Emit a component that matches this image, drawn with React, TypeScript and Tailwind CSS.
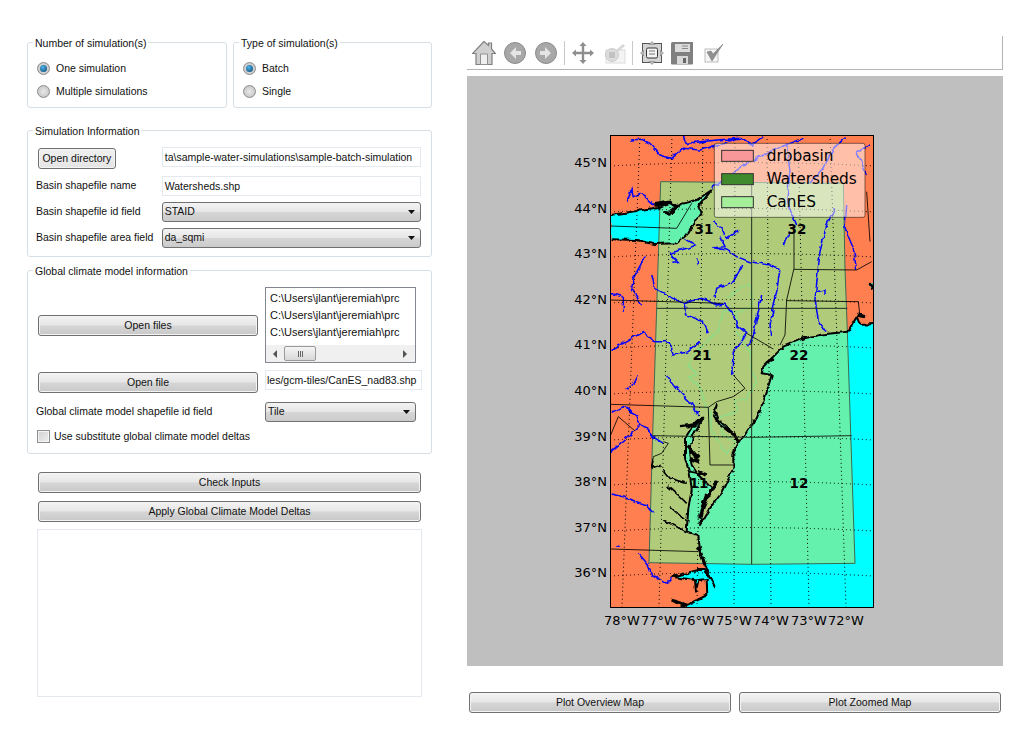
import React from "react";

const btnClass =
  "flex items-center justify-center pt-[1px] border border-[#707070] rounded-[3px] text-[#111] bg-[linear-gradient(#f3f3f3,#e6e6e6_48%,#d6d6d6_52%,#c8c8c8)] shadow-[inset_0_0_0_1px_#f4f4f4]";

const Btn = ({ label, className }: { label: string; className: string }) => (
  <div className={`${btnClass} ${className}`}>{label}</div>
);

const Radio = ({ checked, label }: { checked?: boolean; label: string }) => (
  <div className="flex items-center gap-[6px] h-[13px]">
    <div className="w-[13px] h-[13px] rounded-full border border-[#8c8c8c] bg-[radial-gradient(circle,#e8e8e8,#bdbdbd)] flex items-center justify-center">
      {checked && (
        <div className="w-[7px] h-[7px] rounded-full bg-[radial-gradient(circle_at_40%_35%,#4fb4e8,#07416e)]" />
      )}
    </div>
    <span>{label}</span>
  </div>
);

const Group = ({
  title,
  className,
  children,
}: {
  title: string;
  className: string;
  children: React.ReactNode;
}) => (
  <div className={`relative border border-[#d5dfe5] rounded-[3px] ${className}`}>
    <span className="absolute top-[-7px] left-[5px] bg-white px-[2px] leading-[14px] text-[#111]">
      {title}
    </span>
    {children}
  </div>
);

const Field = ({ value, className }: { value: string; className: string }) => (
  <div
    className={`flex items-center pt-[1px] border border-[#e3e9ef] bg-white px-[2px] whitespace-nowrap ${className}`}
  >
    {value}
  </div>
);

const Select = ({ value, className }: { value: string; className: string }) => (
  <div
    className={`flex items-center justify-between border border-[#707070] rounded-[3px] pl-[2px] pr-[5px] bg-[linear-gradient(#f3f3f3,#e6e6e6_48%,#d6d6d6_52%,#cbcbcb)] ${className}`}
  >
    <span>{value}</span>
    <svg width="7" height="4" viewBox="0 0 7 4">
      <path d="M0 0h7L3.5 4z" fill="#111" />
    </svg>
  </div>
);

function Toolbar() {
  return (
    <div className="h-[34px] w-[536px] mt-[36px] border-b border-r border-[#b4b4b4] flex items-center pl-[5px]">
      {/* home */}
      <svg width="24" height="26" viewBox="0 0 24 26" className="mr-[7px]">
        <path d="M12 1.500L0.500 13.500h3.500v11h16v-11h3.500L19.500 9V3h-3v2.500z" fill="#d0d0d0" stroke="#808080" strokeWidth="1.200" />
        <path d="M8.500 24.500V14h7v10.500z" fill="#efefef" stroke="#909090" />
      </svg>
      {/* back */}
      <svg width="24" height="24" viewBox="0 0 24 24" className="mr-[7px]">
        <circle cx="12" cy="12" r="10.500" fill="#a8a8a8" stroke="#8a8a8a" />
        <path d="M13 6l-6 6 6 6v-4h5v-4h-5z" fill="#e4e4e4" />
      </svg>
      {/* forward */}
      <svg width="24" height="24" viewBox="0 0 24 24" className="mr-[6px]">
        <circle cx="12" cy="12" r="10.500" fill="#a8a8a8" stroke="#8a8a8a" />
        <path d="M11 6l6 6-6 6v-4H6v-4h5z" fill="#e4e4e4" />
      </svg>
      <div className="w-px h-[24px] bg-[#c8c8c8] mr-[6px]" />
      {/* pan */}
      <svg width="24" height="24" viewBox="0 0 24 24" className="mr-[7px]">
        <path d="M12 1l3.500 4h-2.300v5.800H19V8.500l4 3.500-4 3.500v-2.300h-5.800V19h2.300L12 23l-3.500-4h2.300v-5.800H5v2.300L1 12l4-3.500v2.300h5.800V5H8.500z" fill="#8e8e8e" />
      </svg>
      {/* zoom, disabled */}
      <svg width="24" height="24" viewBox="0 0 24 24" className="mr-[6px]">
        <rect x="4" y="9" width="19" height="13" fill="#f4f4f4" stroke="#dcdcdc" />
        <circle cx="10" cy="14" r="6.500" fill="#dcdcdc" stroke="#cccccc" />
        <path d="M7 12h6M7 14h6M7 16h6" stroke="#a8a8a8" />
        <path d="M14 9l7-6 2 2-7 6z" fill="#d8d8d8" />
      </svg>
      <div className="w-px h-[24px] bg-[#c8c8c8] mr-[7px]" />
      {/* configure */}
      <svg width="24" height="24" viewBox="0 0 24 24" className="mr-[6px]">
        <rect x="2.500" y="2.500" width="19" height="19" fill="#d4d4d4" stroke="#555" />
        <rect x="6.500" y="7" width="11" height="10" rx="1.500" fill="#f4f4f4" stroke="#333" />
        <path d="M9 10h6M9 13h6" stroke="#777" />
        <path d="M12 0.500l3 3H9zM12 23.500l3-3H9zM0.500 12l3-3v6zM23.500 12l-3-3v6z" fill="#bbb" stroke="#777" strokeWidth=".5" />
      </svg>
      {/* save */}
      <svg width="24" height="24" viewBox="0 0 24 24" className="mr-[8px]">
        <path d="M1 2.500Q1 1 2.500 1H23v21.500q0 1-1 1H2q-1 0-1-1z" fill="#808080" />
        <rect x="5" y="3" width="15" height="8" fill="#dcdcdc" />
        <path d="M12 5h6M12 7.500h6" stroke="#8a8a8a" />
        <rect x="7" y="15" width="11" height="8" fill="#d8d8d8" />
        <rect x="13" y="17" width="3" height="5" fill="#666" />
      </svg>
      {/* subplots check */}
      <svg width="24" height="24" viewBox="0 0 24 24">
        <rect x="3" y="8" width="13" height="13" fill="#f4f4f4" stroke="#bdbdbd" />
        <path d="M5 11l5 9L21 3l-10 10-2-3z" fill="#909090" stroke="#7d7d7d" strokeWidth=".6" />
      </svg>
    </div>
  );
}

const rivers = [
  "M180,45 L215,43 L240,55 L270,90 L305,100 L340,70 L390,75 L450,60 L500,40",
  "M340,35 L350,55 L440,45 L510,40 L545,60 L580,35",
  "M172,230 L185,190 L190,215 L210,205 L225,215 L250,240",
  "M430,290 L455,310 L470,340 L505,315",
  "M450,335 L465,365 L430,368 L470,375 L500,395 L540,410 L600,420 L630,430 L620,500 L600,600 L605,630",
  "M300,385 L350,370 L375,360 L345,340 M300,385 L325,410 L310,412",
  "M245,450 L255,490 L300,515 L345,535 L395,520 L440,540 L465,537",
  "M345,535 L350,570 L400,590 L415,625",
  "M435,520 L440,490 L490,470 L518,420",
  "M225,395 L190,460 L185,490 L215,540",
  "M122,505 L160,515 L160,560",
  "M122,675 L160,655 L220,620 L255,650 L300,650 L310,690 L355,680 L390,650",
  "M795,250 L770,300 L750,380 L745,430 L735,520 L745,590 L765,620",
  "M740,500 L765,495 L765,510",
  "M660,320 L640,360",
  "M830,240 L825,310 L850,370 L860,435",
  "M575,510 L550,630 L535,665",
  "M380,400 L385,420",
  "M465,537 L490,570 L500,600 L530,625 L490,680 L485,750",
  "M205,750 L190,780 L170,792",
  "M290,750 L320,790 L360,830 L385,870",
  "M122,865 L160,845 L200,870 L210,900 L180,930 L122,980",
  "M210,900 L235,910 L240,930 L280,955",
  "M122,1107 L160,1115 L180,1125 L235,1145 L250,1165",
  "M135,1265 L150,1267",
  "M205,1285 L235,1320 L245,1350 L290,1375 L305,1360",
  "M890,150 L860,80 L900,60",
  "M425,190 L520,120 L620,70 L700,40",
  "M830,35 L790,70 L760,130 L720,170",
  "M650,60 L660,140 L650,230 L680,300",
];

const drb =
  "M540,480 L550,520 L540,550 L500,560 L460,560 L445,620 L420,640 L370,690 L355,720 L385,750 L355,755 L395,790 L400,830 L420,860 L425,920 L470,985 L495,950 L460,930 L440,880 L500,860 L495,830 L530,820 L560,770 L545,730 L540,680 L500,620 L500,560 M540,480 L510,490 L470,520";

const borders =
  "M122,525 L460,535 M530,625 L610,672 M122,838 L415,847 L440,830 L490,815 L525,790 L490,750 M415,847 L420,1020 L490,1020 M672,310 L672,430 L650,525 L645,630 L630,660 M672,433 L860,435 L905,410 M650,527 L865,530 L870,575 M122,303 L320,310 L365,235 M890,200 L900,350 M122,1272 L385,1280 M122,930 L145,875 L195,918 M280,950 L295,955 L275,985 L250,995 L245,1030";

const coast =
  "M122,270 L200,258 L270,245 L300,232 L315,245 L340,235 L380,225 L425,195 L385,245 L395,262 L375,290 L355,325 L320,355 L250,357 L200,345 L122,343";

const creeks =
  "M280,1035 L300,1060 L350,1075 M290,1080 L325,1110 L350,1135 M300,1145 L350,1190 M280,1185 L320,1205 L350,1220 M360,1040 L410,1050 M250,1000 L245,1030 L275,1020";

const blobs =
  "M330,905 L375,900 L400,875 M352,960 L385,1000 M360,1000 L390,1010 M385,1040 L410,1050 M405,1130 L440,1070 M385,1180 L410,1110 M385,1265 L405,1320 M305,1425 L350,1442 M250,240 L300,232 L320,245 L300,265 L280,262 M900,475 L908,490 M860,570 L885,575 M590,715 L610,700";

const oceanEdge =
  "M910,597 L870,600 L860,575 L835,620 L760,628 L700,640 L640,665 L610,695 L580,725 L575,745 L605,750 L590,800 L580,830 L560,880 L535,910 L510,950 L490,925 L445,885 L435,860 L440,840 L430,870 L450,900 L490,930 L505,955 L490,985 L490,1030 L450,1110 L420,1150 L390,1200 L400,1150 L425,1090 L385,1050 L365,1020 L360,980 L370,930 L400,875 L370,900 L345,940 L345,1000 L360,1050 L365,1095 L355,1150 L350,1220 L385,1230 L392,1290 L435,1387 L405,1335 L385,1335 L305,1355 L375,1365 L378,1400 L385,1365 L410,1362 L412,1410 L350,1440";

const lats = [45, 44, 43, 42, 41, 40, 39, 38, 37, 36];
const lons = [78, 77, 76, 75, 74, 73, 72];
const latY = [162, 208, 253, 299, 344, 390, 436, 481, 527, 572];
const lonX = [622, 659, 697, 734, 771, 809, 846];
const lonTop = [640, 672, 703, 735, 767, 798, 830];

function MapPlot() {
  return (
    <svg viewBox="467 76 536 590" className="w-[536px] h-[590px] block font-['DejaVu_Sans']">
      <defs>
        <clipPath id="plot">
          <rect x="610.500" y="135.500" width="263" height="472" />
        </clipPath>
        <filter id="rough" filterUnits="userSpaceOnUse" x="100" y="0" width="840" height="1470" colorInterpolationFilters="sRGB">
          <feTurbulence type="fractalNoise" baseFrequency="0.05" numOctaves="2" seed="4" />
          <feDisplacementMap in="SourceGraphic" scale="14" xChannelSelector="R" yChannelSelector="G" />
        </filter>
      </defs>
      <rect x="467" y="76" width="536" height="590" fill="#bfbfbf" />
      <g clipPath="url(#plot)">
        <rect x="610" y="135" width="264" height="473" fill="#ff7f50" />
        <g transform="translate(570 125) scale(0.33333)">
          <g filter="url(#rough)">
            <path d={coast + " Z"} fill="#00ffff" />
            <path d={oceanEdge + " L350,1470 L940,1470 L940,597 Z"} fill="#00ffff" />
            <circle cx="905" cy="482" r="7" fill="#00ffff" />
            <path d={drb} fill="none" stroke="#8fb47a" strokeWidth="5" />
          </g>
          <path
            d="M272,170 L820,175 L825,430 L832,620 L855,1315 L545,1318 L237,1313 L248,930 L260,550 Z"
            fill="rgb(143,235,140)"
            fillOpacity="0.7"
            stroke="#3c6a50"
            strokeWidth="3"
          />
          <g filter="url(#rough)">
            <path d={rivers.join(" ")} fill="none" stroke="#0000ff" strokeWidth="4.500" />
            <path d={coast} fill="none" stroke="#000" strokeWidth="6" />
            <path d={oceanEdge} fill="none" stroke="#000" strokeWidth="6" strokeLinejoin="round" />
            <path d={creeks} fill="none" stroke="#000" strokeWidth="5" />
            <path d={blobs} fill="none" stroke="#000" strokeWidth="10" />
          </g>
          <path d={borders} fill="none" stroke="#000" strokeWidth="2.500" />
          <path
            d="M545,172 L545,1318 M260,550 L832,550 M248,932 L545,937 L845,932"
            fill="none"
            stroke="#1c2c1c"
            strokeWidth="3"
          />
        </g>
        {latY.map((y) => (
          <path key={y} d={`M610 ${y + 4} Q742 ${y - 3} 874 ${y + 4}`} fill="none" stroke="#000" strokeWidth="1" strokeDasharray="1 3" />
        ))}
        {lonX.map((x, i) => (
          <line key={x} x1={lonTop[i]} y1="135" x2={x} y2="607" stroke="#000" strokeWidth="1" strokeDasharray="1 3" />
        ))}
        <g fontSize="13.500" fontWeight="700" textAnchor="middle" fill="#000">
          <text x="704" y="234">31</text>
          <text x="797" y="234">32</text>
          <text x="702" y="360">21</text>
          <text x="799" y="360">22</text>
          <text x="699" y="488">11</text>
          <text x="799" y="488">12</text>
        </g>
        <g transform="translate(570 125) scale(0.33333)">
          <rect x="433" y="55" width="452" height="222" rx="6" fill="#fff" fillOpacity="0.5" stroke="#000" strokeOpacity="0.5" strokeWidth="3" />
          <rect x="455" y="76" width="95" height="33" fill="#f89898" stroke="#333" strokeWidth="3" />
          <rect x="455" y="146" width="95" height="33" fill="#3f8a2c" stroke="#333" strokeWidth="3" />
          <rect x="455" y="215" width="95" height="33" fill="#a5ee9a" stroke="#333" strokeWidth="3" />
          <g fontSize="46" fill="#000">
            <text x="590" y="107">drbbasin</text>
            <text x="590" y="176">Watersheds</text>
            <text x="590" y="245">CanES</text>
          </g>
        </g>
      </g>
      <rect x="610.500" y="135.500" width="263" height="472" fill="none" stroke="#000" strokeWidth="1" />
      <g fontSize="13" fill="#000">
        {lats.map((l, i) => (
          <text key={l} x="607" y={latY[i] + 5} textAnchor="end">{`${l}°N`}</text>
        ))}
        {lons.map((l, i) => (
          <text key={l} x={lonX[i]} y="625" textAnchor="middle">{`${l}°W`}</text>
        ))}
      </g>
    </svg>
  );
}

export default function App() {
  return (
    <div className="w-[1034px] h-[740px] bg-white flex text-[10.5px] text-[#111] font-['Liberation_Sans',sans-serif] overflow-hidden">
      <div className="w-[405px] ml-[27px] pt-[42px] flex flex-col">
        <div className="flex gap-[6px]">
          <Group title="Number of simulation(s)" className="w-[200px] h-[66px] pt-[19px] pl-[9px] flex flex-col gap-[10px]">
            <Radio checked label="One simulation" />
            <Radio label="Multiple simulations" />
          </Group>
          <Group title="Type of simulation(s)" className="w-[199px] h-[66px] pt-[19px] pl-[9px] flex flex-col gap-[10px]">
            <Radio checked label="Batch" />
            <Radio label="Single" />
          </Group>
        </div>

        <Group title="Simulation Information" className="mt-[22px] h-[127px] pt-[16px] pl-[10px] pr-[10px] flex flex-col">
          <div className="flex items-start h-[29px]">
            <Btn label="Open directory" className="w-[78px] h-[21px] mt-[1px] mr-[46px] !bg-[linear-gradient(#f0f0f0,#e4e4e4)]" />
            <Field value="ta\sample-water-simulations\sample-batch-simulation" className="w-[260px] h-[20px]" />
          </div>
          <div className="flex items-center h-[20px] -ml-[2px]">
            <span className="w-[126px]">Basin shapefile name</span>
            <Field value="Watersheds.shp" className="w-[260px] h-[20px]" />
          </div>
          <div className="flex items-center h-[20px] mt-[6px] -ml-[2px]">
            <span className="w-[126px]">Basin shapefile id field</span>
            <Select value="STAID" className="w-[260px] h-[20px]" />
          </div>
          <div className="flex items-center h-[20px] mt-[6px] -ml-[2px]">
            <span className="w-[126px]">Basin shapefile area field</span>
            <Select value="da_sqmi" className="w-[260px] h-[20px]" />
          </div>
        </Group>

        <Group title="Global climate model information" className="mt-[13px] h-[184px] pt-[16px] pl-[10px] flex flex-col">
          <div className="flex items-center h-[76px]">
            <Btn label="Open files" className="w-[220px] h-[21px] mr-[7px]" />
            <div className="w-[151px] h-[76px] border border-[#828790] flex flex-col">
              <div className="flex-1 pl-[4px] pt-[2px] whitespace-nowrap leading-[17px] text-[11px]">
                <div>C:\Users\jlant\jeremiah\prc</div>
                <div>C:\Users\jlant\jeremiah\prc</div>
                <div>C:\Users\jlant\jeremiah\prc</div>
              </div>
              <div className="h-[17px] bg-[#f0f0f0] flex items-center pl-[7px] pr-[8px]">
                <span className="w-0 h-0 border-y-[4px] border-y-transparent border-r-[4px] border-r-[#555]" />
                <div className="w-[32px] h-[15px] ml-[7px] border border-[#9a9a9a] rounded-[2px] bg-[linear-gradient(#f5f5f5,#d8d8d8)] flex items-center justify-center gap-[1px]">
                  <span className="w-px h-[6px] bg-[#666]" />
                  <span className="w-px h-[6px] bg-[#666]" />
                  <span className="w-px h-[6px] bg-[#666]" />
                </div>
                <span className="ml-auto w-0 h-0 border-y-[4px] border-y-transparent border-l-[4px] border-l-[#555]" />
              </div>
            </div>
          </div>
          <div className="flex items-start h-[32px] mt-[7px]">
            <Btn label="Open file" className="w-[220px] h-[21px] mt-[2px] mr-[7px]" />
            <Field value="les/gcm-tiles/CanES_nad83.shp" className="w-[157px] h-[20px] !px-[1px]" />
          </div>
          <div className="flex items-center h-[20px] -ml-[2px]">
            <span className="w-[229px]">Global climate model shapefile id field</span>
            <Select value="Tile" className="w-[151px] h-[20px]" />
          </div>
          <div className="flex items-center gap-[4px] h-[13px] mt-[8px] -ml-[1px]">
            <div className="w-[13px] h-[13px] border border-[#8e8f8f] bg-[linear-gradient(135deg,#d0d0d0,#f0f0f0)] shadow-[inset_0_0_0_1px_#f4f4f4]" />
            <span>Use substitute global climate model deltas</span>
          </div>
        </Group>

        <div className="pl-[11px] mt-[18px] flex flex-col gap-[8px]">
          <Btn label="Check Inputs" className="w-[383px] h-[21px]" />
          <Btn label="Apply Global Climate Model Deltas" className="w-[383px] h-[21px]" />
        </div>
        <div className="ml-[10px] mt-[7px] w-[385px] h-[168px] border border-[#e3e9ef] bg-white" />
      </div>

      <div className="ml-[35px] w-[536px] flex flex-col">
        <Toolbar />
        <div className="mt-[6px]">
          <MapPlot />
        </div>
        <div className="flex gap-[8px] mt-[26px] ml-[2px]">
          <Btn label="Plot Overview Map" className="w-[262px] h-[21px]" />
          <Btn label="Plot Zoomed Map" className="w-[262px] h-[21px]" />
        </div>
      </div>
    </div>
  );
}
